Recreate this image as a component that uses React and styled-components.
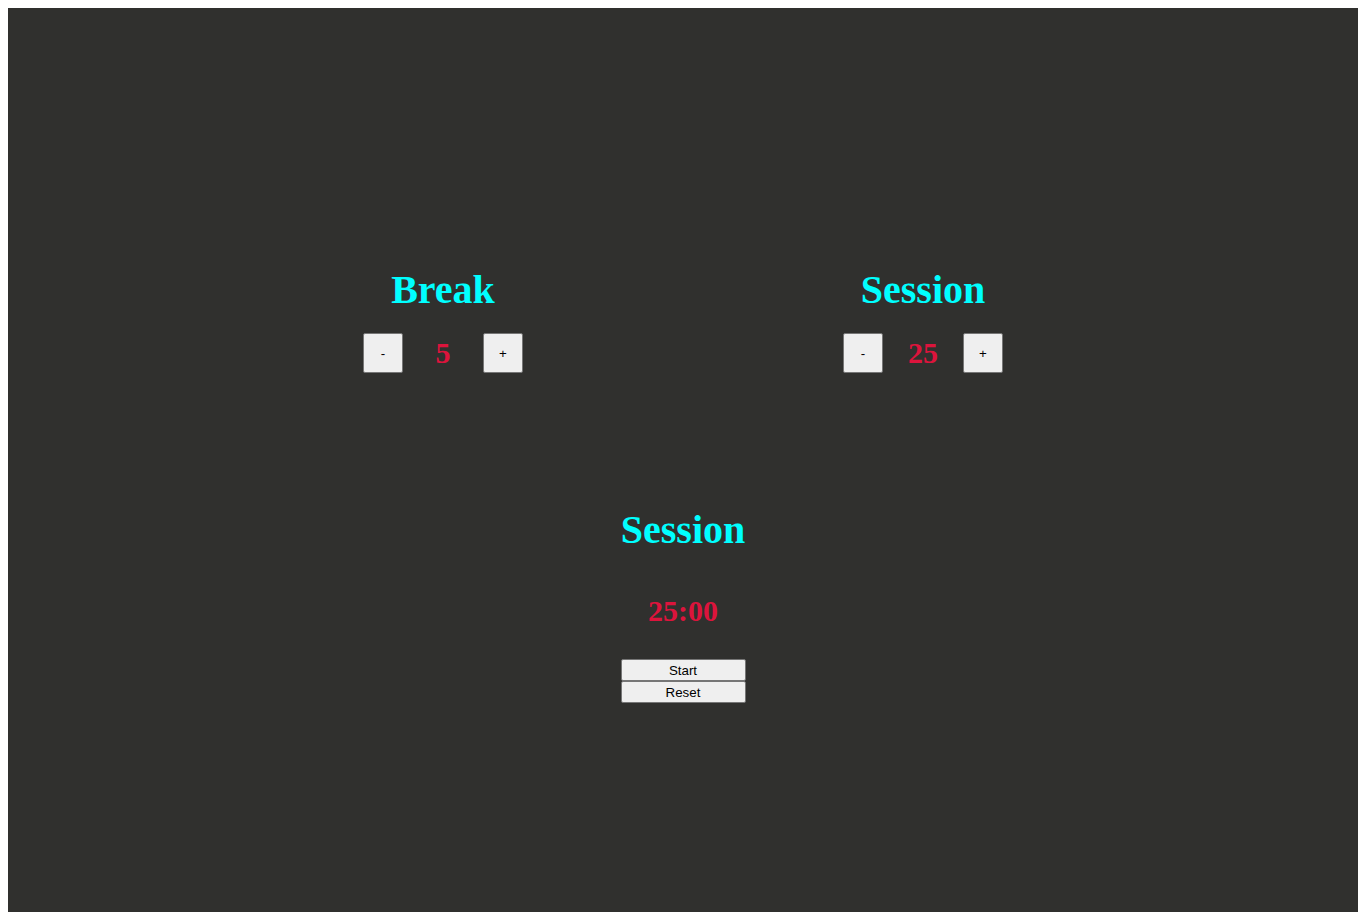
import { useState } from "react";
import styled, { createGlobalStyle } from "styled-components";

const GlobalStyle = createGlobalStyle`
  body {
    margin: 8px 8px 0;
    font-family: "Liberation Serif", "Times New Roman", serif;
  }
`;

export default function App() {
  const [breakLength, setBreakLength] = useState(5);
  const [sessionLength, setSessionLength] = useState(25);

  return (
    <>
      <GlobalStyle />
      <Clock>
        <Settings>
          <Setting>
            <Title>Break</Title>
            <Controls>
              <SquareButton onClick={() => setBreakLength(Math.max(1, breakLength - 1))}>-</SquareButton>
              <Value>{breakLength}</Value>
              <SquareButton onClick={() => setBreakLength(Math.min(60, breakLength + 1))}>+</SquareButton>
            </Controls>
          </Setting>
          <Setting>
            <Title>Session</Title>
            <Controls>
              <SquareButton onClick={() => setSessionLength(Math.max(1, sessionLength - 1))}>-</SquareButton>
              <Value>{sessionLength}</Value>
              <SquareButton onClick={() => setSessionLength(Math.min(60, sessionLength + 1))}>+</SquareButton>
            </Controls>
          </Setting>
        </Settings>
        <Timer>
          <Title>Session</Title>
          <TimeLeft>{String(sessionLength).padStart(2, "0")}:00</TimeLeft>
          <Actions>
            <WideButton>Start</WideButton>
            <WideButton>Reset</WideButton>
          </Actions>
        </Timer>
      </Clock>
    </>
  );
}

const Clock = styled.div`
  height: calc(100vh - 8px);
  background: #30302e;
  display: flex;
  flex-direction: column;
  align-items: center;
  padding-top: 259px;
  box-sizing: border-box;
`;

const Settings = styled.div`
  display: flex;
  justify-content: center;
`;

const Setting = styled.div`
  width: 480px;
  display: flex;
  flex-direction: column;
  align-items: center;
  gap: 20px;
`;

const Title = styled.h1`
  margin: 0;
  color: #00ffff;
  font-size: 40px;
  font-weight: 700;
  line-height: 46px;
`;

const Controls = styled.div`
  display: flex;
  align-items: center;
`;

const Value = styled.span`
  width: 80px;
  text-align: center;
  color: #dc143c;
  font-size: 30px;
  font-weight: 700;
`;

const SquareButton = styled.button`
  width: 40px;
  height: 40px;
  padding: 0;
  background: #efefef;
  border: 1px solid #767676;
  border-radius: 2px;
  color: #000;
  font-family: "Liberation Sans", Arial, sans-serif;
  font-size: 13.33px;
`;

const Timer = styled.div`
  margin-top: 134px;
  display: flex;
  flex-direction: column;
  align-items: center;
`;

const TimeLeft = styled.div`
  margin-top: 40px;
  color: #dc143c;
  font-size: 30px;
  font-weight: 700;
  line-height: 35px;
`;

const Actions = styled.div`
  margin-top: 31px;
  display: flex;
  flex-direction: column;
`;

const WideButton = styled.button`
  width: 125px;
  height: 22px;
  padding: 0;
  background: #efefef;
  border: 1px solid #767676;
  border-radius: 2px;
  color: #000;
  font-family: "Liberation Sans", Arial, sans-serif;
  font-size: 13.33px;
`;
